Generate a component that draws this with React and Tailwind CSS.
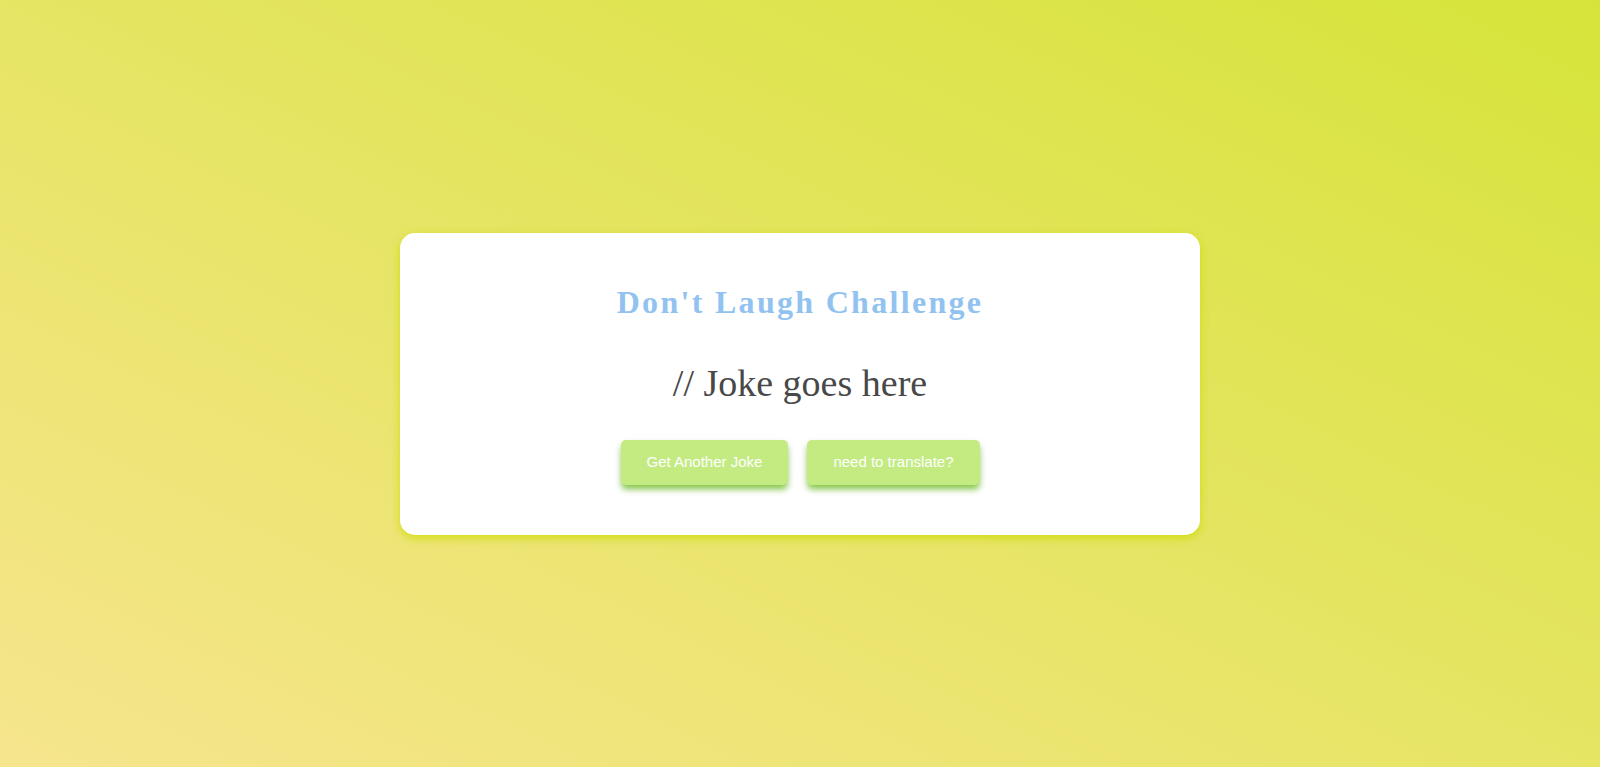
export default function App() {
  return (
    <div className="min-h-screen w-full flex items-center justify-center bg-[linear-gradient(to_top_right,#f6e58d,#d6e43a)]">
      <div className="w-[800px] h-[302px] bg-white rounded-[15px] shadow-[0_3px_8px_rgba(205,220,0,0.85)] flex flex-col items-center pt-[53px]">
        <h1 className="font-['Liberation_Serif',serif] font-bold text-[32px] leading-none tracking-[2.3px] text-[#92c3f0]">
          Don't Laugh Challenge
        </h1>
        <p className="mt-[46px] font-['Liberation_Serif',serif] text-[38px] leading-none text-[#484848]">
          // Joke goes here
        </p>
        <div className="mt-[38px] flex gap-[19px]">
          <button className="h-[45px] px-[26px] rounded-[5px] bg-[#c3eb82] text-white text-[15px] font-['Liberation_Sans',Arial,sans-serif] shadow-[0_5px_6px_-1px_rgba(120,195,50,0.9),0_3px_10px_rgba(0,0,0,0.08)]">
            Get Another Joke
          </button>
          <button className="h-[45px] px-[26px] rounded-[5px] bg-[#c3eb82] text-white text-[15px] font-['Liberation_Sans',Arial,sans-serif] shadow-[0_5px_6px_-1px_rgba(120,195,50,0.9),0_3px_10px_rgba(0,0,0,0.08)]">
            need to translate?
          </button>
        </div>
      </div>
    </div>
  );
}
